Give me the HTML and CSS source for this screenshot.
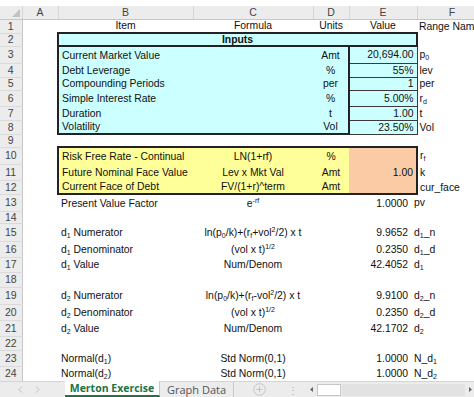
FILE: index.html
```html
<!DOCTYPE html>
<html lang="en">
<head>
  <meta charset="UTF-8">
  <title>Merton Exercise</title>
  <link rel="stylesheet" href="styles.css">
</head>
<body>

  <div class="sheet">
    <table class="grid">
      <colgroup>
        <col class="c-rh"><col class="c-a"><col class="c-b"><col class="c-c"><col class="c-d"><col class="c-e"><col class="c-f">
      </colgroup>
      <thead>
        <tr class="hdr">
          <th class="corner"><span class="tri"></span></th>
          <th>A</th><th>B</th><th>C</th><th>D</th><th>E</th><th class="hf">F</th>
        </tr>
      </thead>
      <tbody>
        <tr class="h14"><td class="rh">1</td><td></td><td class="ctr">Item</td><td class="ctr">Formula</td><td class="ctr">Units</td><td class="ctr">Value</td><td class="rn">Range Name</td></tr>
        <tr class="h13"><td class="rh">2</td><td></td><td colspan="4" class="ctr bold cyan box">Inputs</td><td></td></tr>

        <tr class="h17"><td class="rh">3</td><td></td><td class="cyan bl">Current Market Value</td><td class="cyan"></td><td class="ctr cyan br">Amt</td><td class="num cyan ecell">20,694.00</td><td class="rn">p<sub>0</sub></td></tr>
        <tr class="h14"><td class="rh">4</td><td></td><td class="cyan bl">Debt Leverage</td><td class="cyan"></td><td class="ctr cyan br">%</td><td class="num cyan ecell">55%</td><td class="rn">lev</td></tr>
        <tr class="h13"><td class="rh">5</td><td></td><td class="cyan bl">Compounding Periods</td><td class="cyan"></td><td class="ctr cyan br">per</td><td class="num cyan ecell">1</td><td class="rn">per</td></tr>
        <tr class="h16"><td class="rh">6</td><td></td><td class="cyan bl">Simple Interest Rate</td><td class="cyan"></td><td class="ctr cyan br">%</td><td class="num cyan ecell">5.00%</td><td class="rn">r<sub>d</sub></td></tr>
        <tr class="h14"><td class="rh">7</td><td></td><td class="cyan bl">Duration</td><td class="cyan"></td><td class="ctr cyan br">t</td><td class="num cyan ecell">1.00</td><td class="rn">t</td></tr>
        <tr class="h14"><td class="rh">8</td><td></td><td class="cyan bl bb">Volatility</td><td class="cyan bb"></td><td class="ctr cyan br bb">Vol</td><td class="num cyan ecell">23.50%</td><td class="rn">Vol</td></tr>
        <tr class="h13"><td class="rh">9</td><td></td><td></td><td></td><td></td><td></td><td></td></tr>

        <tr class="h17"><td class="rh">10</td><td></td><td class="yel bl bt">Risk Free Rate - Continual</td><td class="ctr yel bt">LN(1+rf)</td><td class="ctr yel bt">%</td><td class="num peach bt br"></td><td class="rn">r<sub>f</sub></td></tr>
        <tr class="h16"><td class="rh">11</td><td></td><td class="yel bl">Future Nominal Face Value</td><td class="ctr yel">Lev x Mkt Val</td><td class="ctr yel">Amt</td><td class="num peach br">1.00</td><td class="rn">k</td></tr>
        <tr class="h14"><td class="rh">12</td><td></td><td class="yel bl bb">Current Face of Debt</td><td class="ctr yel bb">FV/(1+r)^term</td><td class="ctr yel bb">Amt</td><td class="num peach br bb"></td><td class="rn">cur_face</td></tr>

        <tr class="h17"><td class="rh">13</td><td></td><td>Present Value Factor</td><td class="ctr">e<sup>-rf</sup></td><td></td><td class="num low">1.0000</td><td class="rn low">pv</td></tr>
        <tr class="h12"><td class="rh">14</td><td></td><td></td><td></td><td></td><td></td><td></td></tr>
        <tr class="h18"><td class="rh">15</td><td></td><td>d<sub>1</sub> Numerator</td><td class="ctr">ln(p<sub>0</sub>/k)+(r<sub>f</sub>+vol<sup>2</sup>/2) x t</td><td></td><td class="num low">9.9652</td><td class="rn low">d<sub>1</sub>_n</td></tr>
        <tr class="h16"><td class="rh">16</td><td></td><td>d<sub>1</sub> Denominator</td><td class="ctr">(vol x t)<sup>1/2</sup></td><td></td><td class="num low">0.2350</td><td class="rn low">d<sub>1</sub>_d</td></tr>
        <tr class="h15"><td class="rh">17</td><td></td><td>d<sub>1</sub> Value</td><td class="ctr">Num/Denom</td><td></td><td class="num low">42.4052</td><td class="rn low">d<sub>1</sub></td></tr>
        <tr class="h15"><td class="rh">18</td><td></td><td></td><td></td><td></td><td></td><td></td></tr>
        <tr class="h17"><td class="rh">19</td><td></td><td>d<sub>2</sub> Numerator</td><td class="ctr">ln(p<sub>0</sub>/k)+(r<sub>f</sub>-vol<sup>2</sup>/2) x t</td><td></td><td class="num low">9.9100</td><td class="rn low">d<sub>2</sub>_n</td></tr>
        <tr class="h16"><td class="rh">20</td><td></td><td>d<sub>2</sub> Denominator</td><td class="ctr">(vol x t)<sup>1/2</sup></td><td></td><td class="num low">0.2350</td><td class="rn low">d<sub>2</sub>_d</td></tr>
        <tr class="h16"><td class="rh">21</td><td></td><td>d<sub>2</sub> Value</td><td class="ctr">Num/Denom</td><td></td><td class="num low">42.1702</td><td class="rn low">d<sub>2</sub></td></tr>
        <tr class="h14"><td class="rh">22</td><td></td><td></td><td></td><td></td><td></td><td></td></tr>
        <tr class="h16"><td class="rh">23</td><td></td><td>Normal(d<sub>1</sub>)</td><td class="ctr">Std Norm(0,1)</td><td></td><td class="num low">1.0000</td><td class="rn low">N_d<sub>1</sub></td></tr>
        <tr class="h15"><td class="rh">24</td><td></td><td>Normal(d<sub>2</sub>)</td><td class="ctr">Std Norm(0,1)</td><td></td><td class="num low">1.0000</td><td class="rn low">N_d<sub>2</sub></td></tr>
      </tbody>
    </table>
  </div>

  <div class="tabs">
    <div class="nav">
      <svg width="5" height="7" viewBox="0 0 5 7"><path d="M4 0.5 L1 3.5 L4 6.5" fill="none" stroke="#bdbdbd" stroke-width="1"/></svg>
      <svg width="5" height="7" viewBox="0 0 5 7"><path d="M1 0.5 L4 3.5 L1 6.5" fill="none" stroke="#bdbdbd" stroke-width="1"/></svg>
    </div>
    <div class="tab active">Merton Exercise</div>
    <div class="tab">Graph Data</div>
    <div class="add">
      <svg width="13" height="13" viewBox="0 0 13 13"><circle cx="6.5" cy="6.5" r="5.8" fill="none" stroke="#c4c4c4"/><path d="M6.5 3.5 V9.5 M3.5 6.5 H9.5" stroke="#c4c4c4"/></svg>
    </div>
    <div class="dots">&#8942;</div>
    <div class="hscroll">
      <svg width="8" height="7" viewBox="0 0 8 7"><path d="M5 1 L2 3.5 L5 6 Z" fill="#666"/></svg>
      <span class="thumb"></span>
      <span class="track"></span>
      <svg width="8" height="7" viewBox="0 0 8 7"><path d="M3 1 L6 3.5 L3 6 Z" fill="#666"/></svg>
    </div>
  </div>

</body>
</html>
```

FILE: styles.css
```css
html, body {
  margin: 0;
  padding: 0;
  background: #fff;
  overflow: hidden;
}
body {
  width: 474px;
  height: 397px;
  font-family: "Liberation Sans", Arial, sans-serif;
  color: #111;
}

.sheet {
  height: 375px;
  padding-top: 6px;
  overflow: hidden;
}
.grid {
  border-collapse: collapse;
  table-layout: fixed;
  width: 487px;
  font-size: 10.4px;
  line-height: 11px;
}
.c-rh { width: 22px; }
.c-a { width: 36px; }
.c-b { width: 135px; }
.c-c { width: 120px; }
.c-d { width: 36px; }
.c-e { width: 68px; }
.c-f { width: 70px; }

.grid td {
  padding: 0 3px;
  white-space: nowrap;
  overflow: visible;
  vertical-align: middle;
}

/* headers */
.hdr { height: 13px; }
.hdr th {
  background: #ececec;
  color: #444;
  font-weight: normal;
  font-size: 10.5px;
  border-right: 1px solid #d6d6d6;
  border-bottom: 1px solid #c6c6c6;
  padding: 0;
}
.hdr .corner { position: relative; }
.tri {
  position: absolute;
  right: 2px;
  bottom: 2px;
  width: 0;
  height: 0;
  border-left: 8px solid transparent;
  border-bottom: 8px solid #c2c2c2;
}
.grid td.rh {
  background: #ececec;
  color: #444;
  text-align: center;
  padding: 0;
  font-size: 10.5px;
  border-right: 1px solid #c6c6c6;
  border-bottom: 1px solid #dadada;
}

.h12 { height: 12px; }
.h13 { height: 13px; }
.h14 { height: 14px; }
.h15 { height: 15px; }
.h16 { height: 16px; }
.h17 { height: 17px; }
.h18 { height: 18px; }

.ctr { text-align: center; }
.bold { font-weight: bold; }
.grid td.num { text-align: right; padding-right: 3px; }
.grid td.num.low { padding-right: 9px; }
.grid td.rn { padding-left: 2px; }
.grid td.rn.low { padding-left: 0; text-indent: -3px; }

.cyan { background: #ccffff; }
.yel { background: #ffff99; }
.peach { background: #fbcba6; }

.box { border: 2px solid #222; }
.bl { border-left: 2px solid #222; }
.br { border-right: 2px solid #222; }
.bt { border-top: 2px solid #222; }
.bb { border-bottom: 2px solid #222; }
.ecell { border: 1px solid #3a3a3a; }

sub, sup {
  font-size: 7px;
  line-height: 0;
}
sub { vertical-align: -2px; }
sup { vertical-align: 4px; }

/* sheet tabs */
.tabs {
  height: 16px;
  background: #ececec;
  border-top: 1px solid #d4d4d4;
  display: flex;
  align-items: stretch;
  font-family: "Open Sans", sans-serif;
  font-size: 11px;
  box-sizing: border-box;
}
.nav {
  width: 65px;
  display: flex;
  align-items: center;
  gap: 12px;
  padding-left: 18px;
  box-sizing: border-box;
}
.tab {
  display: flex;
  align-items: center;
  white-space: nowrap;
  color: #555;
  padding: 0 7px;
  border-right: 1px solid #c8c8c8;
}
.tab.active {
  width: 95px;
  padding: 0;
  box-sizing: border-box;
  justify-content: center;
  background: #fff;
  color: #217346;
  font-weight: bold;
  font-size: 10.5px;
  margin-top: -1px;
  border-bottom: 2px solid #217346;
}
.add {
  width: 50px;
  display: flex;
  align-items: center;
  justify-content: center;
}
.dots {
  width: 18px;
  display: flex;
  align-items: center;
  justify-content: center;
  color: #aaa;
  font-size: 10px;
}
.hscroll {
  flex: 1;
  display: flex;
  align-items: center;
  padding: 0 0 0 6px;
  gap: 1px;
}
.thumb {
  width: 22px;
  height: 10px;
  background: #fff;
  border: 1px solid #c6c6c6;
}
.track {
  flex: 1;
  height: 12px;
  background: #e2e2e2;
}
```
